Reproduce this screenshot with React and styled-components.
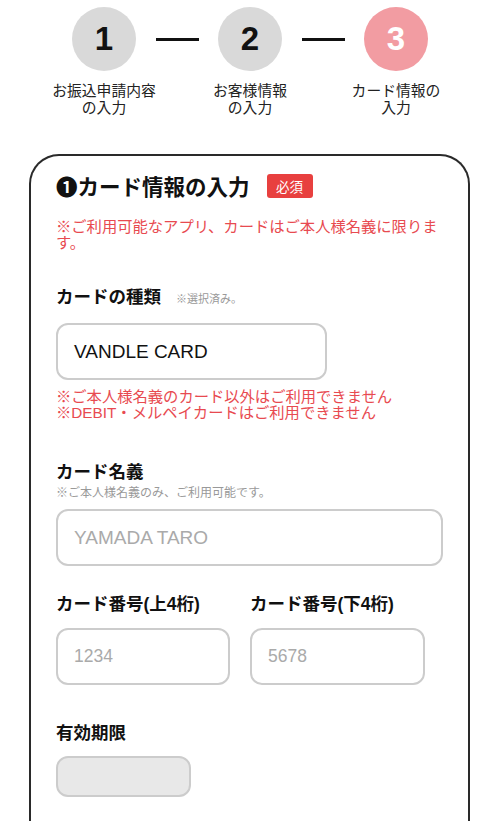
import React from 'react';
import styled, { createGlobalStyle } from 'styled-components';

const GlobalStyle = createGlobalStyle`
  * { box-sizing: border-box; }
  body {
    margin: 0;
    background: #fff;
    font-family: "Liberation Sans", "Noto Sans CJK JP", sans-serif;
    color: #111;
  }
`;

const steps = [
  { num: '1', label: ['お振込申請内容', 'の入力'] },
  { num: '2', label: ['お客様情報', 'の入力'] },
  { num: '3', label: ['カード情報の', '入力'], active: true },
];

const Steps = styled.div`
  display: flex;
  justify-content: center;
  padding-top: 7px;
`;

const Step = styled.div`
  width: 105px;
  display: flex;
  flex-direction: column;
  align-items: center;
`;

const Circle = styled.div`
  width: 64px;
  height: 64px;
  border-radius: 50%;
  background: ${p => (p.$active ? '#f29ca2' : '#d9d9d9')};
  color: ${p => (p.$active ? '#fff' : '#111')};
  display: flex;
  align-items: center;
  justify-content: center;
  font-size: 33px;
  font-weight: 700;
`;

const StepLabel = styled.div`
  margin-top: 12px;
  font-size: 14.8px;
  line-height: 16.6px;
  text-align: center;
  white-space: nowrap;
  color: #222;
  font-family: "Liberation Sans", "Noto Sans CJK JP", sans-serif;
`;

const Dash = styled.div`
  width: 43px;
  height: 2.5px;
  background: #111;
  margin: 31px -1px 0;
`;

const Card = styled.section`
  margin: 38px 30px 0 29px;
  border: 2px solid #2a2a2a;
  border-bottom: none;
  border-radius: 30px 30px 0 0;
  padding: 18px 25px 40px 25px;
  min-height: 700px;
`;

const TitleRow = styled.div`
  display: flex;
  align-items: center;
`;

const Title = styled.h2`
  margin: 0;
  font-size: 21.5px;
  line-height: 24px;
  font-weight: 700;
  font-family: "Noto Sans CJK JP", sans-serif;
`;

const Badge = styled.span`
  margin-left: 17px;
  width: 46px;
  height: 24px;
  border-radius: 3px;
  background: #e8403f;
  color: #fff;
  font-size: 13.5px;
  display: flex;
  align-items: center;
  justify-content: center;
  font-family: "Noto Sans CJK JP", sans-serif;
`;

const Note = styled.p`
  margin: ${p => p.$mt || 0}px 0 0;
  color: #e84a50;
  font-size: 15.3px;
  line-height: 15.5px;
  font-family: "Liberation Sans", "Noto Sans CJK JP", sans-serif;
`;

const Label = styled.div`
  margin-top: ${p => p.$mt}px;
  display: flex;
  align-items: baseline;
  font-size: 17.5px;
  line-height: 20px;
  font-weight: 700;
  white-space: nowrap;
`;

const Hint = styled.span`
  display: block;
  font-size: ${p => (p.$inline ? 11 : 12)}px;
  line-height: 14px;
  font-weight: 400;
  color: #999;
  margin-left: ${p => (p.$inline ? '15px' : '0')};
  margin-top: ${p => (p.$inline ? '0' : '4px')};
`;

const Field = styled.div`
  margin-top: ${p => p.$mt}px;
  width: ${p => p.$w}px;
  height: ${p => p.$h || 57}px;
  border: 2px solid #cccccc;
  border-radius: 12px;
  background: ${p => (p.$disabled ? '#e8e8e8' : '#fff')};
  display: flex;
  align-items: center;
  padding-left: 16px;
  font-size: ${p => (p.$small ? 17.5 : 19)}px;
  color: ${p => (p.$placeholder ? '#aaa' : '#111')};
`;

const Pair = styled.div`
  display: flex;
  gap: 20px;
`;

const Col = styled.div`
  display: flex;
  flex-direction: column;
`;

export default function App() {
  return (
    <>
      <GlobalStyle />
      <Steps>
        {steps.map((s, i) => (
          <React.Fragment key={s.num}>
            {i > 0 && <Dash />}
            <Step>
              <Circle $active={s.active}>{s.num}</Circle>
              <StepLabel>
                {s.label[0]}
                <br />
                {s.label[1]}
              </StepLabel>
            </Step>
          </React.Fragment>
        ))}
      </Steps>

      <Card>
        <TitleRow>
          <Title>❶カード情報の入力</Title>
          <Badge>必須</Badge>
        </TitleRow>
        <Note $mt={21}>※ご利用可能なアプリ、カードはご本人様名義に限ります。</Note>

        <Label $mt={37}>
          カードの種類<Hint $inline>※選択済み。</Hint>
        </Label>
        <Field $mt={16} $w={271}>VANDLE CARD</Field>
        <Note $mt={9}>
          ※ご本人様名義のカード以外はご利用できません
          <br />
          ※DEBIT・メルペイカードはご利用できません
        </Note>

        <Col>
          <Label $mt={42}>カード名義</Label>
          <Hint>※ご本人様名義のみ、ご利用可能です。</Hint>
        </Col>
        <Field $mt={9} $w={387} $placeholder>YAMADA TARO</Field>

        <Pair>
          <Col>
            <Label $mt={28}>カード番号(上4桁)</Label>
            <Field $mt={14} $w={174} $placeholder $small>1234</Field>
          </Col>
          <Col>
            <Label $mt={28}>カード番号(下4桁)</Label>
            <Field $mt={14} $w={175} $placeholder $small>5678</Field>
          </Col>
        </Pair>

        <Label $mt={38}>有効期限</Label>
        <Field $mt={13} $w={135} $h={41} $disabled />
      </Card>
    </>
  );
}
